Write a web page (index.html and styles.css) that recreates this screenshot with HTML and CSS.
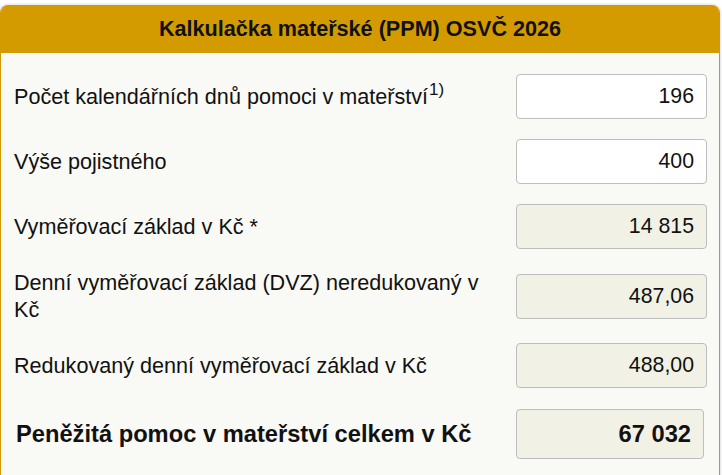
FILE: index.html
```html
<!DOCTYPE html>
<html lang="cs">
<head>
<meta charset="utf-8">
<title>Kalkulačka mateřské (PPM) OSVČ 2026</title>
<link rel="stylesheet" href="styles.css">
</head>
<body>
<div class="calc">
  <div class="calc-head">Kalkulačka mateřské (PPM) OSVČ 2026</div>
  <div class="calc-body">
    <div class="row">
      <label class="lbl">Počet kalendářních dnů pomoci v mateřství<sup class="note">1)</sup></label>
      <input class="field" type="text" value="196">
    </div>
    <div class="row">
      <label class="lbl">Výše pojistného</label>
      <input class="field" type="text" value="400">
    </div>
    <div class="row">
      <label class="lbl">Vyměřovací základ v Kč *</label>
      <input class="field ro" type="text" value="14 815" readonly>
    </div>
    <div class="row">
      <label class="lbl">Denní vyměřovací základ (DVZ) neredukovaný v Kč</label>
      <input class="field ro" type="text" value="487,06" readonly>
    </div>
    <div class="row">
      <label class="lbl">Redukovaný denní vyměřovací základ v Kč</label>
      <input class="field ro" type="text" value="488,00" readonly>
    </div>
    <div class="row total">
      <label class="lbl">Peněžitá pomoc v mateřství celkem v Kč</label>
      <div class="field ro result">67 032</div>
    </div>
  </div>
</div>
</body>
</html>
```
FILE: styles.css
```css
html, body {
  margin: 0;
  padding: 0;
  background: #ffffff;
}
body {
  font-family: "Liberation Sans", Arial, sans-serif;
  color: #111;
}
.calc {
  margin-top: 5px;
  width: 718px;
  border: 1px solid #d49b00;
  border-top: none;
  border-radius: 8px 8px 0 0;
  background: #f9f9f5;
  box-shadow: 0 0 3px rgba(0,0,0,0.25);
  overflow: hidden;
}
.calc-head {
  background: #d49b00;
  height: 48px;
  display: flex;
  align-items: center;
  justify-content: center;
  font-weight: bold;
  font-size: 21.6px;
  color: #111;
}
.calc-body {
  padding: 11px 0 20px 0;
}
.row {
  display: grid;
  grid-template-columns: 1fr 191px;
  column-gap: 15px;
  align-items: center;
  padding: 10px 12px 10px 13px;
}
.lbl {
  font-size: 21.6px;
  line-height: 27px;
  color: #111;
}
.note {
  font-size: 17px;
  line-height: 0;
  vertical-align: 9px;
  margin-left: 1px;
}
.field {
  box-sizing: border-box;
  width: 191px;
  height: 45px;
  border: 1px solid #bdbdbd;
  border-radius: 4px;
  background: #ffffff;
  font-family: "Liberation Sans", Arial, sans-serif;
  font-size: 21.3px;
  color: #111;
  text-align: right;
  padding: 0 12px;
  margin: 0;
  outline: none;
}
.ro {
  background: #f1f1e6;
}
.total {
  padding-top: 11px;
}
.total .lbl {
  font-weight: bold;
  font-size: 23.7px;
  padding-left: 2px;
}
.result {
  width: 188px;
  height: 50px;
  margin-left: 0;
  display: flex;
  align-items: center;
  justify-content: flex-end;
  font-weight: bold;
  font-size: 23.7px;
}
```
